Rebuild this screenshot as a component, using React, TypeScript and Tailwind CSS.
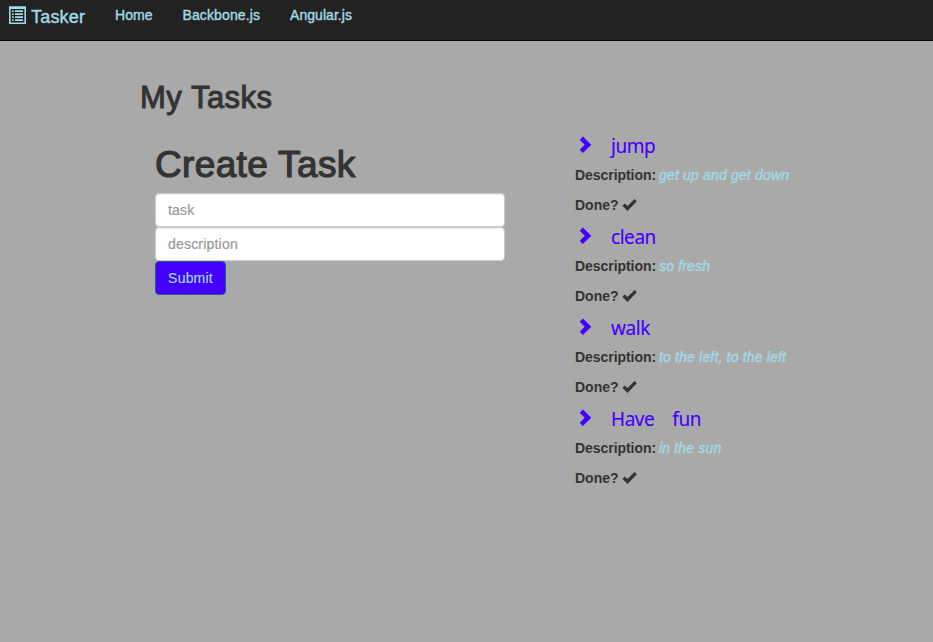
const tasks = [
  { title: 'jump', description: 'get up and get down' },
  { title: 'clean', description: 'so fresh' },
  { title: 'walk', description: 'to the left, to the left' },
  { title: 'Have fun', description: 'in the sun' },
];

function ListIcon() {
  return (
    <svg className="h-[18px] w-[17px] shrink-0" viewBox="0 0 17 18" fill="currentColor">
      <path fillRule="evenodd" d="M0 .2h17V18H0zM1.6 3v13.4h13.8V3z" />
      <path d="M3 4.2h1.7v1.7H3zM6 4.2h8v1.7H6zM3 7.2h1.7v1.7H3zM6 7.2h8v1.7H6zM3 10.2h1.7v1.7H3zM6 10.2h8v1.7H6zM3 13.2h1.7v1.7H3zM6 13.2h8v1.7H6z" />
    </svg>
  );
}

function Chevron() {
  return (
    <svg className="mt-[2px] ml-[4px] h-[18px] w-[14px] shrink-0" viewBox="0 0 14 18" fill="currentColor">
      <path d="M3.9.6L12.3 8.8L3.9 17L.7 13.8L5.7 8.8L.7 3.8z" />
    </svg>
  );
}

function Check() {
  return (
    <svg className="ml-[3px] h-[13px] w-[16px] shrink-0" viewBox="0 0 16 13" fill="currentColor">
      <path d="M12.6 0L14.8 2.3L5.5 11.9L.4 6.7L2.8 4.4L5.5 7z" />
    </svg>
  );
}

function Task({ title, description }: (typeof tasks)[number]) {
  return (
    <li className="h-[91px]">
      <h4 className="flex h-[31px] text-[#4400ff]">
        <Chevron />
        <span className="ml-[18px] font-['Noto_Sans','Open_Sans',sans-serif] text-[19px] leading-[25px] tracking-[-0.45px] [word-spacing:13.5px] [-webkit-text-stroke:0.15px]">
          {title}
        </span>
      </h4>
      <p className="flex h-[30px] leading-[20px] whitespace-nowrap">
        <b className="w-[84px] tracking-[-0.05px]">Description:</b>
        <em className="tracking-[0.17px] text-[#a2d9e7] [-webkit-text-stroke:0.4px]">{description}</em>
      </p>
      <p className="flex h-[20px] items-center leading-[20px]">
        <b>Done?</b>
        <Check />
      </p>
    </li>
  );
}

export default function App() {
  return (
    <div className="h-[642px] w-[933px] overflow-hidden bg-[#a9a9a9] font-['Liberation_Sans',Arial,sans-serif] text-sm text-[#333]">
      <nav className="flex h-[41px] items-start border-b border-[#080808] bg-[#222] leading-[20px] text-[#a2d9e7] [-webkit-text-stroke:0.4px]">
        <a className="mt-[6px] ml-[9px] flex w-[106px] text-lg leading-[22px]">
          <ListIcon />
          <span className="ml-[5px] tracking-[0.2px]">Tasker</span>
        </a>
        <a className="mt-[5px] w-[67.5px] tracking-[0.1px]">Home</a>
        <a className="mt-[5px] w-[107.5px] tracking-[0.12px]">Backbone.js</a>
        <a className="mt-[5px] tracking-[0.05px]">Angular.js</a>
      </nav>
      <main className="pt-[39px] pl-[140px]">
        <h2 className="h-[53px] text-[31px] leading-[35px] tracking-[0.5px] [-webkit-text-stroke:1px]">My Tasks</h2>
        <div className="flex">
          <form className="ml-[15px] w-[350px] pt-[11px]">
            <h1 className="h-[49px] text-[37px] leading-[42px] tracking-[0.35px] [-webkit-text-stroke:1.2px]">Create Task</h1>
            <input
              className="block h-[34px] w-full rounded-[4px] border border-[#ccc] bg-white px-3 shadow-[inset_0_1px_1px_rgba(0,0,0,0.075)] placeholder:tracking-[0.2px] placeholder:text-[#999] placeholder:[-webkit-text-stroke:0.2px]"
              placeholder="task"
            />
            <input
              className="block h-[34px] w-full rounded-[4px] border border-[#ccc] bg-white px-3 shadow-[inset_0_1px_1px_rgba(0,0,0,0.075)] placeholder:tracking-[0.2px] placeholder:text-[#999] placeholder:[-webkit-text-stroke:0.2px]"
              placeholder="description"
            />
            <button type="button" className="block h-[34px] w-[71px] rounded-[4px] border border-[#285e8e] bg-[#4400ff] tracking-[0.2px] text-[#a2d9e7] [-webkit-text-stroke:0.2px]">
              Submit
            </button>
          </form>
          <ul className="ml-[70px] pt-[1px]">
            {tasks.map((task) => (
              <Task key={task.title} {...task} />
            ))}
          </ul>
        </div>
      </main>
    </div>
  );
}
